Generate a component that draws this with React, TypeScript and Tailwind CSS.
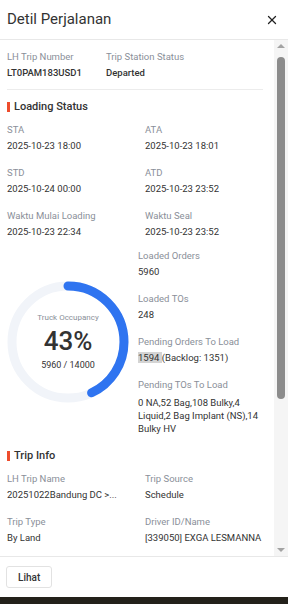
import { X } from "lucide-react";

const TIMES = [
  { a: "STA", av: "2025-10-23 18:00", b: "ATA", bv: "2025-10-23 18:01" },
  { a: "STD", av: "2025-10-24 00:00", b: "ATD", bv: "2025-10-23 23:52" },
  { a: "Waktu Mulai Loading", av: "2025-10-23 22:34", b: "Waktu Seal", bv: "2025-10-23 23:52" },
];

const TRIP_INFO = [
  { a: "LH Trip Name", av: "20251022Bandung DC >...", b: "Trip Source", bv: "Schedule" },
  { a: "Trip Type", av: "By Land", b: "Driver ID/Name", bv: "[339050] EXGA LESMANNA" },
];

function Field({ label, value }: { label: string; value: React.ReactNode }) {
  return (
    <div className="min-w-0">
      <p className="text-[9.5px] leading-[14px] text-[#8a8f99]">{label}</p>
      <p className="mt-[2px] text-[9.5px] leading-[14px] text-[#333]">{value}</p>
    </div>
  );
}

function SectionTitle({ children }: { children: string }) {
  return (
    <div className="flex items-center gap-[4px]">
      <span className="w-[3px] h-[10px] bg-[#ee4d2d]" />
      <h3 className="text-[11px] leading-[16px] font-medium text-[#333]">{children}</h3>
    </div>
  );
}

function Donut({ pct }: { pct: number }) {
  const r = 56;
  const c = 2 * Math.PI * r;
  return (
    <div className="relative w-[122px] h-[122px] shrink-0">
      <svg width="122" height="122" viewBox="0 0 122 122" className="-rotate-90">
        <circle cx="61" cy="61" r={r} fill="none" stroke="#f1f4f9" strokeWidth="9" />
        <circle
          cx="61" cy="61" r={r} fill="none" stroke="#2f74f0" strokeWidth="9" strokeLinecap="round"
          strokeDasharray={`${(c * pct) / 100} ${c}`}
        />
      </svg>
      <div className="absolute inset-0 flex flex-col items-center justify-center">
        <p className="text-[8px] leading-[10px] text-[#8a8f99]">Truck Occupancy</p>
        <p className="mt-[4px] text-[26px] leading-[28px] font-medium text-[#333]">{pct}%</p>
        <p className="mt-[4px] text-[9px] leading-[12px] text-[#333]">5960 / 14000</p>
      </div>
    </div>
  );
}

export default function App() {
  return (
    <div className="w-[288px] h-[604px] flex flex-col bg-white font-['Roboto',sans-serif] overflow-hidden">
      <div className="h-[40px] shrink-0 flex items-center justify-between pl-[7px] pr-[9px] border-b border-[#e8e8e8]">
        <h2 className="text-[15px] text-[#333]">Detil Perjalanan</h2>
        <X size={14} strokeWidth={2.2} className="text-[#222]" />
      </div>

      <div className="flex-1 min-h-0 flex">
        <div className="flex-1 min-w-0 overflow-hidden pl-[7px] pr-[11px] pt-[10px]">
          <div className="flex pb-[9px] border-b border-[#ececec]">
            <div className="w-[99px]">
              <p className="text-[9.5px] leading-[14px] text-[#8a8f99]">LH Trip Number</p>
              <p className="mt-[2px] text-[9.5px] leading-[14px] font-medium text-[#333]">LT0PAM183USD1</p>
            </div>
            <div>
              <p className="text-[9.5px] leading-[14px] text-[#8a8f99]">Trip Station Status</p>
              <p className="mt-[2px] text-[9.5px] leading-[14px] font-medium text-[#333]">Departed</p>
            </div>
          </div>

          <div className="pt-[9px]">
            <SectionTitle>Loading Status</SectionTitle>
            <div className="mt-[8px] grid grid-cols-[138px_1fr] gap-y-[13px]">
              {TIMES.map((row) => (
                <>
                  <Field key={row.a} label={row.a} value={row.av} />
                  <Field key={row.b} label={row.b} value={row.bv} />
                </>
              ))}
            </div>

            <div className="mt-[10px] flex">
              <div className="w-[131px] shrink-0 flex items-center">
                <Donut pct={43} />
              </div>
              <div className="flex-1 flex flex-col gap-[13px]">
                <Field label="Loaded Orders" value="5960" />
                <Field label="Loaded TOs" value="248" />
                <Field
                  label="Pending Orders To Load"
                  value={<><span className="bg-[#d4d4d4]">1594 </span>(Backlog: 1351)</>}
                />
                <div>
                  <p className="text-[9.5px] leading-[14px] text-[#8a8f99]">Pending TOs To Load</p>
                  <p className="mt-[4px] text-[9.5px] leading-[13px] text-[#333]">
                    0 NA,52 Bag,108 Bulky,4 Liquid,2 Bag Implant (NS),14 Bulky HV
                  </p>
                </div>
              </div>
            </div>
          </div>

          <div className="pt-[13px]">
            <SectionTitle>Trip Info</SectionTitle>
            <div className="mt-[8px] grid grid-cols-[138px_1fr] gap-y-[13px]">
              {TRIP_INFO.map((row) => (
                <>
                  <Field key={row.a} label={row.a} value={row.av} />
                  <Field key={row.b} label={row.b} value={row.bv} />
                </>
              ))}
            </div>
          </div>
        </div>

        <div className="w-[14px] shrink-0 bg-[#f5f5f5] flex flex-col items-center py-[4px]">
          <span className="w-0 h-0 border-l-[4px] border-r-[4px] border-b-[4px] border-l-transparent border-r-transparent border-b-[#a3a3a3]" />
          <span className="mt-[9px] w-[8px] h-[342px] rounded-full bg-[#8c8c8c]" />
          <span className="flex-1" />
          <span className="w-0 h-0 border-l-[4px] border-r-[4px] border-t-[4px] border-l-transparent border-r-transparent border-t-[#a3a3a3]" />
        </div>
      </div>

      <div className="h-[41px] shrink-0 border-t border-[#e8e8e8] flex items-center px-[6px]">
        <button className="h-[22px] px-[11px] rounded-[3px] border border-[#e2e2e2] text-[10px] font-medium text-[#333]">
          Lihat
        </button>
      </div>
      <div className="h-[7px] shrink-0 bg-[#23211a]" />
    </div>
  );
}
